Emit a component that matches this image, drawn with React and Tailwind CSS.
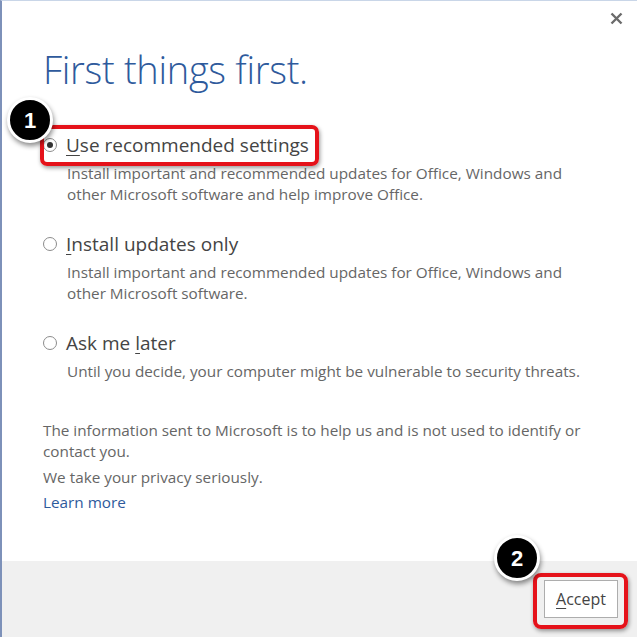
import React from "react";

const font = { fontFamily: '"Open Sans", "Noto Sans", sans-serif' };

function Radio({ checked }) {
  return (
    <span className="relative flex h-[14px] w-[14px] shrink-0 items-center justify-center rounded-full border border-[#8c8c8c] bg-white">
      {checked && <span className="h-[6px] w-[6px] rounded-full bg-[#333]" />}
    </span>
  );
}

function Option({ checked, label, desc }) {
  return (
    <div className="flex flex-col">
      <div className="flex items-center gap-[9px]">
        <Radio checked={checked} />
        <span className="text-[19px] leading-[26px] text-[#444]">{label}</span>
      </div>
      <div className="mt-[5px] pl-[24px] text-[15.3px] leading-[21px] text-[#666]">
        {desc.map((d, i) => (
          <div key={i}>{d}</div>
        ))}
      </div>
    </div>
  );
}

function U({ children }) {
  return <span className="underline decoration-1 underline-offset-[3px]">{children}</span>;
}

function Badge({ n, className }) {
  return (
    <div
      className={`absolute flex h-[46px] w-[46px] items-center justify-center rounded-full border-[3px] border-white bg-black text-[22px] font-bold text-white shadow-[1px_3px_5px_rgba(0,0,0,0.45)] ${className}`}
      style={{ fontFamily: '"Liberation Sans", Arial, sans-serif' }}
    >
      {n}
    </div>
  );
}

export default function App() {
  return (
    <div className="relative h-[640px] w-[640px] overflow-hidden bg-white" style={font}>
      <div className="flex h-[637px] w-[637px] flex-col border-l-2 border-t border-l-[#7d91b9] border-t-[#c9d6e8] bg-white">
        <div className="flex justify-end pr-[14px] pt-[11px]">
          <svg width="13" height="13" viewBox="0 0 13 13">
            <path d="M1.5 1.5 L11.5 11.5 M11.5 1.5 L1.5 11.5" stroke="#6b6b6b" strokeWidth="2.4" />
          </svg>
        </div>
        <div className="flex flex-1 flex-col pl-[41px]">
          <h1 className="mt-[21px] text-[38px] font-light leading-[46px] tracking-[-0.3px] text-[#2e5a9c]">
            First things first.
          </h1>
          <div className="mt-[40px] flex flex-col gap-[26px]">
            <Option
              checked
              label={<><U>U</U>se recommended settings</>}
              desc={[
                "Install important and recommended updates for Office, Windows and",
                "other Microsoft software and help improve Office.",
              ]}
            />
            <Option
              label={<><U>I</U>nstall updates only</>}
              desc={[
                "Install important and recommended updates for Office, Windows and",
                "other Microsoft software.",
              ]}
            />
            <Option
              label={<>Ask me <U>l</U>ater</>}
              desc={["Until you decide, your computer might be vulnerable to security threats."]}
            />
          </div>
          <div className="mt-[38px] text-[15.3px] leading-[21px] text-[#666]">
            <div className="pr-[40px]">
              The information sent to Microsoft is to help us and is not used to identify or contact you.
            </div>
            <div className="mt-[5px]">We take your privacy seriously.</div>
            <div className="mt-[4px] text-[#2e5a9c]">Learn more</div>
          </div>
        </div>
        <div className="flex h-[76px] items-center justify-end bg-[#f0f0f0] pr-[19px]">
          <button className="flex h-[38px] w-[74px] items-center justify-center border border-[#adadad] bg-white text-[16px] text-[#444]">
            <U>A</U>ccept
          </button>
        </div>
      </div>
      <div className="pointer-events-none absolute left-[40px] top-[125px] h-[41px] w-[279px] rounded-[7px] border-[4px] border-[#e5121a] shadow-[1px_2px_4px_rgba(0,0,0,0.4)]" />
      <div className="pointer-events-none absolute left-[533px] top-[573px] h-[56px] w-[95px] rounded-[8px] border-[4px] border-[#e5121a] shadow-[1px_2px_4px_rgba(0,0,0,0.4)]" />
      <Badge n="1" className="left-[7px] top-[97px]" />
      <Badge n="2" className="left-[494px] top-[535px]" />
    </div>
  );
}
